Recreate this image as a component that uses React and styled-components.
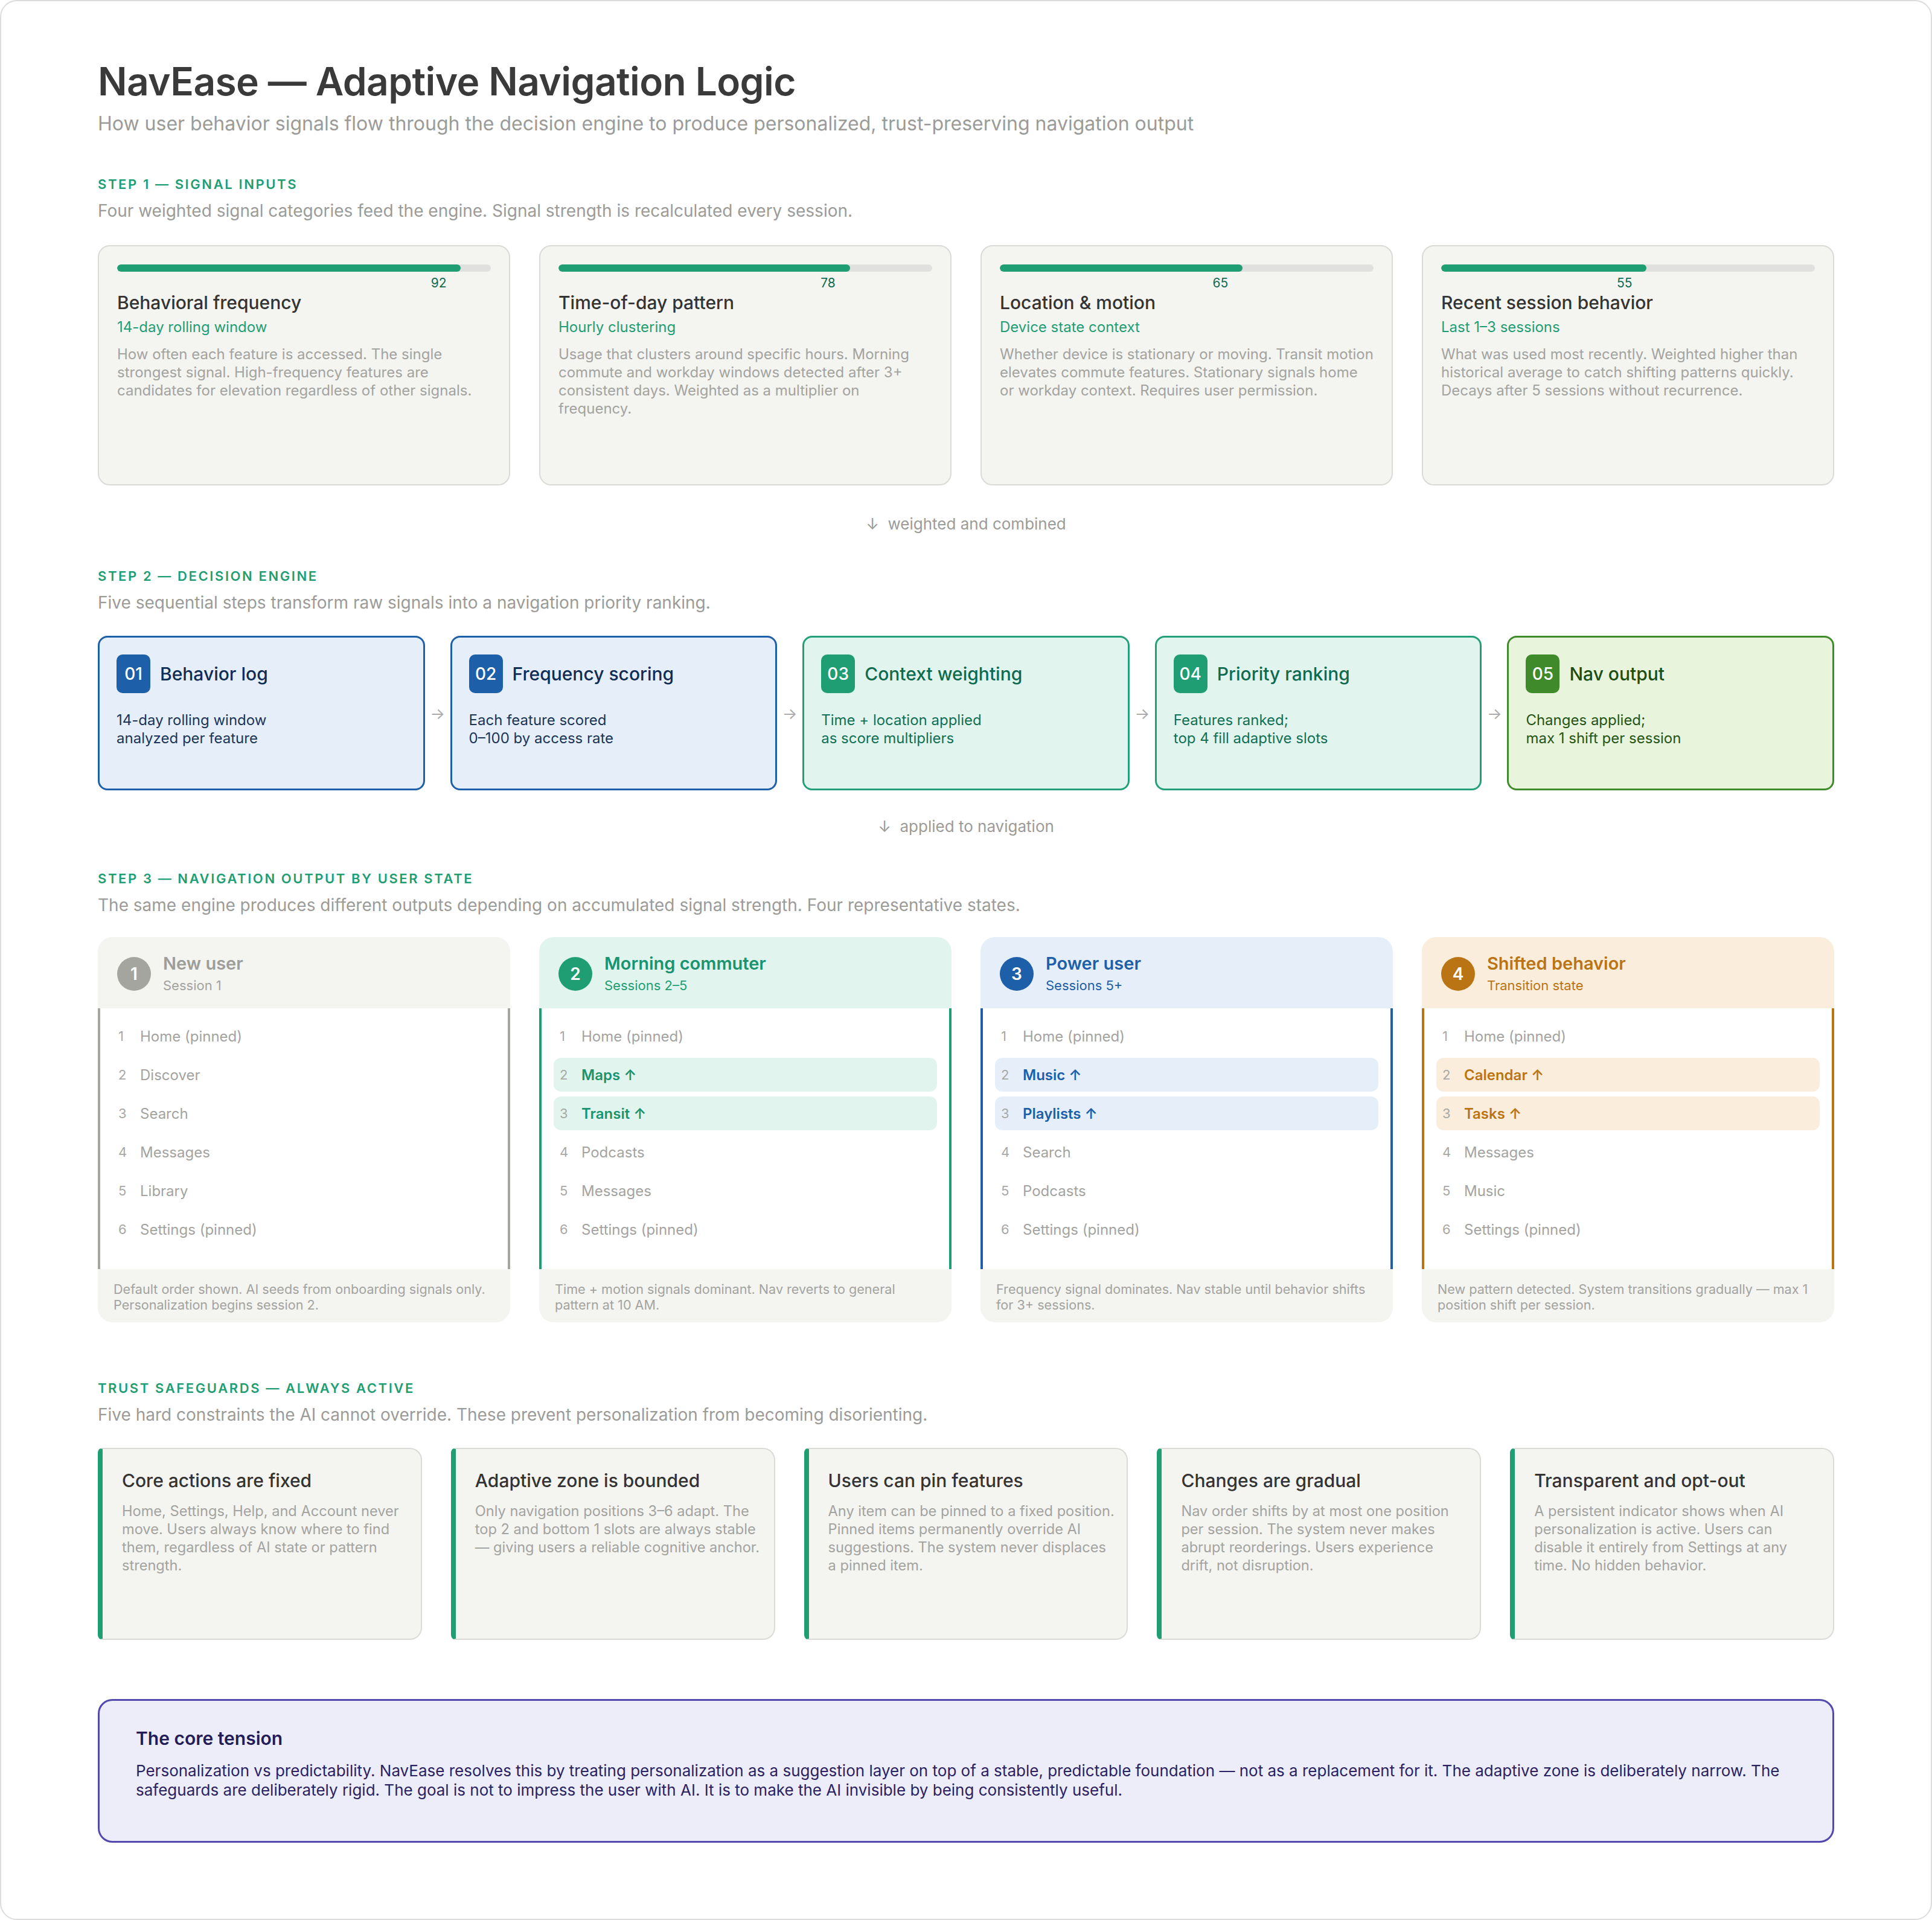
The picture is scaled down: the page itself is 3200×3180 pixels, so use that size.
import React from "react";
import styled, { createGlobalStyle } from "styled-components";

const Global = createGlobalStyle`
  html { zoom: 2; }
  body { margin: 0; background: #fff; font-family: Inter, "Noto Sans", sans-serif; color: #333; }
`;

const Page = styled.div`
  width: 1600px;
  min-height: 1590px;
  box-sizing: border-box;
  border: 1px solid #dcdcdc;
  border-radius: 14px;
  padding: 47px 80px 60px;
`;

const Title = styled.h1`
  margin: 0;
  font-size: 32px;
  font-weight: 600;
  color: #3a3a3a;
  letter-spacing: -0.3px;
`;

const Subtitle = styled.p`
  margin: 6px 0 0;
  font-size: 16px;
  color: #9b9b98;
`;

const Label = styled.div`
  margin-top: ${(p) => p.$top || 36}px;
  font-size: 11px;
  font-weight: 600;
  letter-spacing: 1.3px;
  color: #1f9e74;
  text-transform: uppercase;
`;

const Desc = styled.p`
  margin: 7px 0 0;
  font-size: 14px;
  color: #9b9b98;
`;

const Grid = styled.div`
  display: grid;
  grid-template-columns: repeat(${(p) => p.$cols}, 1fr);
  gap: 24px;
  margin-top: ${(p) => p.$top || 20}px;
`;

const SignalCard = styled.div`
  background: #f4f4f1;
  border: 1px solid #dadad7;
  border-radius: 10px;
  height: 199px;
  box-sizing: border-box;
  padding: 15px 15px;
`;

const Track = styled.div`
  height: 6px;
  border-radius: 3px;
  background: #e0e0de;
  overflow: hidden;
`;

const Fill = styled.div`
  height: 100%;
  background: #1f9e74;
  border-radius: 3px;
`;

const Score = styled.div`
  font-size: 10.5px;
  color: #0f6b50;
  text-align: right;
  padding-right: 12px;
  margin-top: 3px;
  box-sizing: border-box;
`;

const CardTitle = styled.div`
  font-size: 15px;
  font-weight: 500;
  color: #333;
  margin-top: ${(p) => p.$top || 0}px;
`;

const CardSub = styled.div`
  font-size: 12px;
  color: #1f9e74;
  margin-top: 4px;
`;

const CardText = styled.div`
  font-size: 12px;
  line-height: 15px;
  color: #a3a3a0;
  margin-top: ${(p) => p.$top || 8}px;
`;

const Connector = styled.div`
  margin-top: ${(p) => p.$top || 24}px;
  text-align: center;
  font-size: 13px;
  color: #9b9b98;
`;

const EngineRow = styled.div`
  display: flex;
  align-items: center;
  margin-top: 19px;
`;

const Arrow = styled.div`
  width: 21px;
  flex: none;
  text-align: center;
  color: #aaa;
  font-size: 13px;
`;

const palettes = {
  blue: { bg: "#e6eff9", border: "#1d5fa8", badge: "#1d5fa8", title: "#0f2d55", text: "#1b3558" },
  teal: { bg: "#e1f5ee", border: "#22a07a", badge: "#1f9e74", title: "#0f6b50", text: "#117055" },
  green: { bg: "#e8f4dc", border: "#3f8a2a", badge: "#3f8a2a", title: "#1d4d10", text: "#245416" },
};

const EngineCard = styled.div`
  flex: 1;
  height: 128px;
  box-sizing: border-box;
  background: ${(p) => palettes[p.$c].bg};
  border: 1.5px solid ${(p) => palettes[p.$c].border};
  border-radius: 8px;
  padding: 14px 14px;
`;

const EngineHead = styled.div`
  display: flex;
  align-items: center;
  gap: 8px;
`;

const Badge = styled.div`
  min-width: 28px;
  height: 32px;
  padding: 0 3px;
  box-sizing: border-box;
  border-radius: 5px;
  background: ${(p) => palettes[p.$c].badge};
  color: #fff;
  font-size: 14px;
  font-weight: 500;
  display: flex;
  align-items: center;
  justify-content: center;
`;

const EngineTitle = styled.div`
  font-size: 15px;
  font-weight: 500;
  color: ${(p) => palettes[p.$c].title};
`;

const EngineText = styled.div`
  margin-top: 15px;
  font-size: 12px;
  line-height: 15px;
  color: ${(p) => palettes[p.$c].text};
`;

const states = {
  gray: { head: "#f4f4f1", dot: "#a5a5a0", title: "#9d9d99", sub: "#a3a3a0", line: "#a5a5a0", hl: "#f4f4f1" },
  teal: { head: "#e1f5ee", dot: "#1f9e74", title: "#1a9470", sub: "#1f9e74", line: "#1f9e74", hl: "#e1f5ee" },
  blue: { head: "#e6eff9", dot: "#1d5fa8", title: "#1d5fa8", sub: "#1d5fa8", line: "#1d5fa8", hl: "#e6eff9" },
  amber: { head: "#faeddb", dot: "#bb7413", title: "#bb7413", sub: "#bb7413", line: "#bb7413", hl: "#faeddb" },
};

const StateCard = styled.div`
  border-radius: 12px;
  overflow: hidden;
  display: flex;
  flex-direction: column;
`;

const StateHead = styled.div`
  background: ${(p) => states[p.$c].head};
  height: 59px;
  display: flex;
  align-items: center;
  gap: 10px;
  padding: 0 16px;
`;

const Dot = styled.div`
  width: 28px;
  height: 28px;
  border-radius: 50%;
  background: ${(p) => states[p.$c].dot};
  color: #fff;
  font-size: 14px;
  font-weight: 600;
  display: flex;
  align-items: center;
  justify-content: center;
  margin-top: 2px;
`;

const StateTitle = styled.div`
  font-size: 14.5px;
  font-weight: 600;
  color: ${(p) => states[p.$c].title};
`;

const StateSub = styled.div`
  font-size: 11px;
  color: ${(p) => states[p.$c].sub};
  margin-top: 3px;
`;

const StateBody = styled.div`
  background: #fff;
  border-left: 2px solid ${(p) => states[p.$c].line};
  border-right: 2px solid ${(p) => states[p.$c].line};
  height: 216px;
  box-sizing: border-box;
  padding: 9px 10px 0;
  display: flex;
  flex-direction: column;
  gap: 4px;
`;

const NavItem = styled.div`
  height: 28px;
  border-radius: 6px;
  display: flex;
  align-items: center;
  padding: 0 5px;
  background: ${(p) => (p.$up ? states[p.$c].hl : "transparent")};
  font-size: 12px;
`;

const NavNum = styled.span`
  width: 18px;
  color: #a8a8a5;
  font-size: 11px;
`;

const NavName = styled.span`
  color: ${(p) => (p.$up ? states[p.$c].title : "#a3a3a0")};
  font-weight: ${(p) => (p.$up ? 600 : 400)};
`;

const StateFoot = styled.div`
  background: #f4f4f1;
  padding: 10px 12px 8px 13px;
  font-size: 10.8px;
  line-height: 13px;
  color: #a3a3a0;
  height: 44px;
  box-sizing: border-box;
`;

const TrustCard = styled.div`
  background: #f4f4f1;
  border: 1px solid #dadad7;
  border-left: 4px solid #1f9e74;
  border-radius: 4px 10px 10px 4px;
  height: 159px;
  box-sizing: border-box;
  padding: 17px 10px 17px 16px;
`;

const TrustText = styled.div`
  font-size: 11.8px;
  line-height: 15px;
  color: #a3a3a0;
  margin-top: 9px;
`;

const Tension = styled.div`
  margin-top: 49px;
  background: #ededf9;
  border: 1.5px solid #5347b0;
  border-radius: 12px;
  padding: 22px 30px 34px;
  min-height: 119px;
  box-sizing: border-box;
`;

const TensionTitle = styled.div`
  font-size: 15px;
  font-weight: 600;
  color: #241c57;
`;

const TensionText = styled.p`
  margin: 10px 0 0;
  font-size: 13px;
  line-height: 16px;
  color: #2a2262;
`;

const signals = [
  { v: 92, t: "Behavioral frequency", s: "14-day rolling window", d: "How often each feature is accessed. The single strongest signal. High-frequency features are candidates for elevation regardless of other signals." },
  { v: 78, t: "Time-of-day pattern", s: "Hourly clustering", d: "Usage that clusters around specific hours. Morning commute and workday windows detected after 3+ consistent days. Weighted as a multiplier on frequency." },
  { v: 65, t: "Location & motion", s: "Device state context", d: "Whether device is stationary or moving. Transit motion elevates commute features. Stationary signals home or workday context. Requires user permission." },
  { v: 55, t: "Recent session behavior", s: "Last 1–3 sessions", d: "What was used most recently. Weighted higher than historical average to catch shifting patterns quickly. Decays after 5 sessions without recurrence." },
];

const engine = [
  { c: "blue", n: "01", t: "Behavior log", d: ["14-day rolling window", "analyzed per feature"] },
  { c: "blue", n: "02", t: "Frequency scoring", d: ["Each feature scored", "0–100 by access rate"] },
  { c: "teal", n: "03", t: "Context weighting", d: ["Time + location applied", "as score multipliers"] },
  { c: "teal", n: "04", t: "Priority ranking", d: ["Features ranked;", "top 4 fill adaptive slots"] },
  { c: "green", n: "05", t: "Nav output", d: ["Changes applied;", "max 1 shift per session"] },
];

const userStates = [
  { c: "gray", n: 1, t: "New user", s: "Session 1", items: ["Home (pinned)", "Discover", "Search", "Messages", "Library", "Settings (pinned)"], up: [], f: "Default order shown. AI seeds from onboarding signals only. Personalization begins session 2." },
  { c: "teal", n: 2, t: "Morning commuter", s: "Sessions 2–5", items: ["Home (pinned)", "Maps", "Transit", "Podcasts", "Messages", "Settings (pinned)"], up: [1, 2], f: "Time + motion signals dominant. Nav reverts to general pattern at 10 AM." },
  { c: "blue", n: 3, t: "Power user", s: "Sessions 5+", items: ["Home (pinned)", "Music", "Playlists", "Search", "Podcasts", "Settings (pinned)"], up: [1, 2], f: "Frequency signal dominates. Nav stable until behavior shifts for 3+ sessions." },
  { c: "amber", n: 4, t: "Shifted behavior", s: "Transition state", items: ["Home (pinned)", "Calendar", "Tasks", "Messages", "Music", "Settings (pinned)"], up: [1, 2], f: "New pattern detected. System transitions gradually — max 1 position shift per session." },
];

const trust = [
  { t: "Core actions are fixed", d: "Home, Settings, Help, and Account never move. Users always know where to find them, regardless of AI state or pattern strength." },
  { t: "Adaptive zone is bounded", d: "Only navigation positions 3–6 adapt. The top 2 and bottom 1 slots are always stable — giving users a reliable cognitive anchor." },
  { t: "Users can pin features", d: "Any item can be pinned to a fixed position. Pinned items permanently override AI suggestions. The system never displaces a pinned item." },
  { t: "Changes are gradual", d: "Nav order shifts by at most one position per session. The system never makes abrupt reorderings. Users experience drift, not disruption." },
  { t: "Transparent and opt-out", d: "A persistent indicator shows when AI personalization is active. Users can disable it entirely from Settings at any time. No hidden behavior." },
];

const App = () => (
  <Page>
    <Global />
    <Title>NavEase — Adaptive Navigation Logic</Title>
    <Subtitle>How user behavior signals flow through the decision engine to produce personalized, trust-preserving navigation output</Subtitle>

    <Label $top={34}>Step 1 — Signal inputs</Label>
    <Desc>Four weighted signal categories feed the engine. Signal strength is recalculated every session.</Desc>
    <Grid $cols={4}>
      {signals.map((s) => (
        <SignalCard key={s.t}>
          <Track>
            <Fill style={{ width: `${s.v}%` }} />
          </Track>
          <Score style={{ width: `${s.v}%` }}>{s.v}</Score>
          <CardTitle $top={1}>{s.t}</CardTitle>
          <CardSub>{s.s}</CardSub>
          <CardText>{s.d}</CardText>
        </SignalCard>
      ))}
    </Grid>

    <Connector>↓ &nbsp;weighted and combined</Connector>

    <Label $top={29}>Step 2 — Decision engine</Label>
    <Desc>Five sequential steps transform raw signals into a navigation priority ranking.</Desc>
    <EngineRow>
      {engine.map((e, i) => (
        <React.Fragment key={e.n}>
          {i > 0 && <Arrow>→</Arrow>}
          <EngineCard $c={e.c}>
            <EngineHead>
              <Badge $c={e.c}>{e.n}</Badge>
              <EngineTitle $c={e.c}>{e.t}</EngineTitle>
            </EngineHead>
            <EngineText $c={e.c}>
              {e.d[0]}
              <br />
              {e.d[1]}
            </EngineText>
          </EngineCard>
        </React.Fragment>
      ))}
    </EngineRow>

    <Connector $top={22}>↓ &nbsp;applied to navigation</Connector>

    <Label $top={29}>Step 3 — Navigation output by user state</Label>
    <Desc>The same engine produces different outputs depending on accumulated signal strength. Four representative states.</Desc>
    <Grid $cols={4} $top={18}>
      {userStates.map((u) => (
        <StateCard key={u.t}>
          <StateHead $c={u.c}>
            <Dot $c={u.c}>{u.n}</Dot>
            <div>
              <StateTitle $c={u.c}>{u.t}</StateTitle>
              <StateSub $c={u.c}>{u.s}</StateSub>
            </div>
          </StateHead>
          <StateBody $c={u.c}>
            {u.items.map((it, i) => {
              const up = u.up.includes(i);
              return (
                <NavItem key={it} $c={u.c} $up={up}>
                  <NavNum>{i + 1}</NavNum>
                  <NavName $c={u.c} $up={up}>
                    {it}
                    {up ? " ↑" : ""}
                  </NavName>
                </NavItem>
              );
            })}
          </StateBody>
          <StateFoot>{u.f}</StateFoot>
        </StateCard>
      ))}
    </Grid>

    <Label $top={48}>Trust safeguards — always active</Label>
    <Desc>Five hard constraints the AI cannot override. These prevent personalization from becoming disorienting.</Desc>
    <Grid $cols={5} $top={19}>
      {trust.map((t) => (
        <TrustCard key={t.t}>
          <CardTitle>{t.t}</CardTitle>
          <TrustText>{t.d}</TrustText>
        </TrustCard>
      ))}
    </Grid>

    <Tension>
      <TensionTitle>The core tension</TensionTitle>
      <TensionText>
        Personalization vs predictability. NavEase resolves this by treating personalization as a suggestion layer on top of a stable, predictable foundation — not as a replacement for it. The adaptive zone is deliberately narrow. The safeguards are deliberately rigid. The goal is not to impress the user with AI. It is to make the AI invisible by being consistently useful.
      </TensionText>
    </Tension>
  </Page>
);

export default App;
